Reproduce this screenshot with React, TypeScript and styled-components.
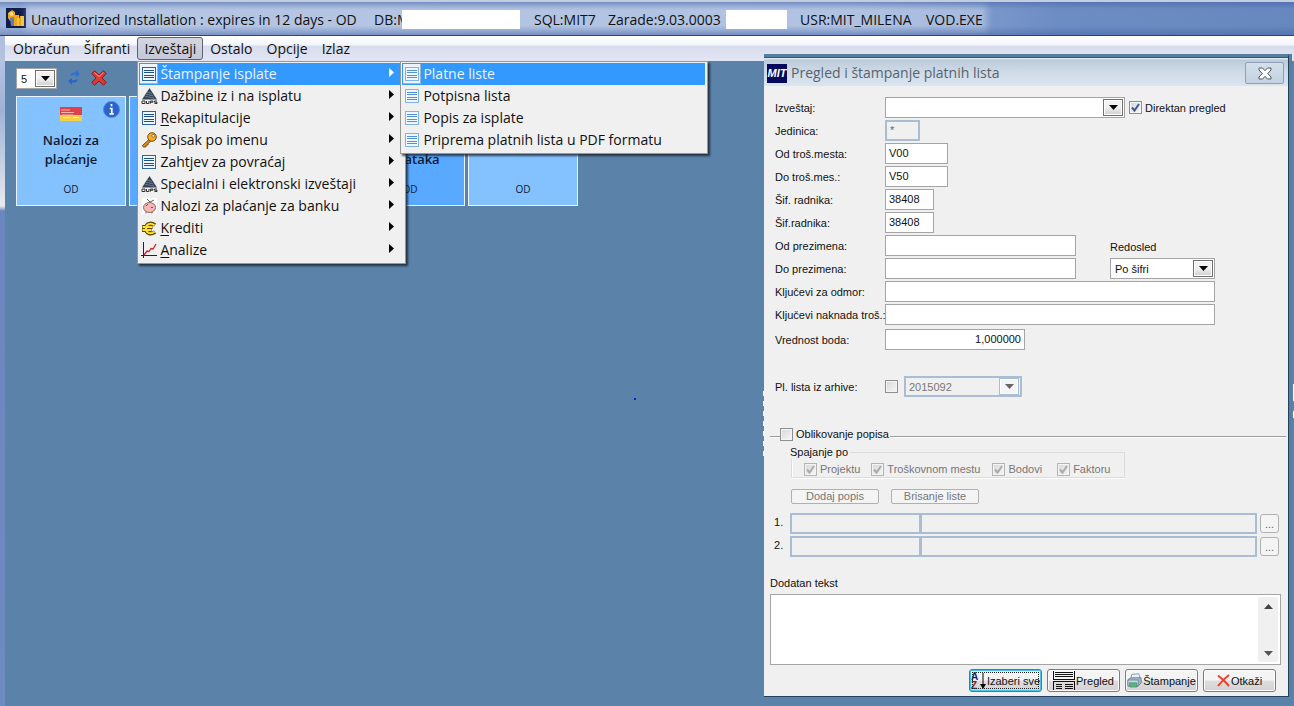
import React from "react";
import styled, { createGlobalStyle, css } from "styled-components";

const ui = `"Open Sans", "Noto Sans", sans-serif`;
const sans = `"Liberation Sans", Arial, sans-serif`;

const GlobalStyle = createGlobalStyle`
  *, *::before, *::after { box-sizing: border-box; }
  body { margin: 0; font-family: ${ui}; font-size: 14px; color: #111; }
  button, input, select, textarea { font: inherit; color: inherit; margin: 0; padding: 0; border-radius: 0; }
  fieldset { border: 0; margin: 0; padding: 0; min-width: 0; }
  ul { list-style: none; margin: 0; padding: 0; }
`;

/* ---------- main window ---------- */

const Window = styled.div`
  position: relative;
  display: flex;
  flex-direction: column;
  min-height: 100vh;
  overflow: hidden;
  padding-left: 5px;
  background: linear-gradient(#a3b7da 0, #b4c3e0 60px, #9fb2d6 110px, #e6e9f0 206px, #6b87bd 211px, #6d8cc0 100%);
`;

const TitleBar = styled.header`
  display: flex;
  align-items: center;
  height: 36px;
  margin-left: -5px;
  padding: 0 0 1px 6px;
  gap: 5px;
  border-top: 2px solid #c3cee0;
  border-bottom: 1px solid #2c4474;
  background: linear-gradient(rgba(60, 90, 160, 0.45), rgba(120, 150, 200, 0) 7px, rgba(120, 150, 200, 0) 24px, rgba(50, 80, 150, 0.35)),
    linear-gradient(90deg, #9fb4da, #93abd6 860px, #6c8cc4 1060px, #6787bf);
`;

const TitleText = styled.h1`
  display: grid;
  grid-template-columns: 343px 28px 132px 74px 118px 74px 126px auto;
  align-items: center;
  margin: 0;
  height: 16px;
  line-height: 16px;
  font-size: 14px;
  font-weight: 400;
  white-space: nowrap;
  background: rgba(205, 217, 238, 0.5);
  box-shadow: 0 0 7px 4px rgba(205, 217, 238, 0.5);
`;

const Redacted = styled.span<{ $width: number }>`
  position: relative;
  width: ${(p) => p.$width}px;
  height: 19px;
  background: #fff;
`;

const MenuBar = styled.nav`
  height: 25px;
  padding: 1px 1px;
  background: linear-gradient(#fff 0, #f3f5fb 9px, #d7dcec 10px, #e2e5f4 24px);
`;

const MenuBarList = styled.ul`
  display: flex;
`;

const MenuBarItem = styled.li`
  position: relative;
`;

const MenuBarButton = styled.button<{ $open?: boolean }>`
  height: 23px;
  padding: 0 6px;
  border: 1px solid ${(p) => (p.$open ? "#5d6272" : "transparent")};
  border-radius: 3px;
  background: ${(p) => (p.$open ? "linear-gradient(#d3d6e0, #c4c8d8)" : "none")};
  line-height: 20px;
`;

const Menu = styled.ul<{ $sub?: boolean }>`
  position: absolute;
  z-index: ${(p) => (p.$sub ? 6 : 5)};
  top: ${(p) => (p.$sub ? "-2px" : "24px")};
  left: ${(p) => (p.$sub ? "calc(100% - 3px)" : "0")};
  width: ${(p) => (p.$sub ? 308 : 269)}px;
  padding: 1px 2px 2px 1px;
  border: 1px solid #979797;
  background: #f0f0f0;
  box-shadow: 2px 2px 2px rgba(20, 25, 35, 0.75);
  color: #111;
`;

const MenuItem = styled.li`
  position: relative;
`;

const MenuButton = styled.button<{ $active?: boolean }>`
  display: flex;
  align-items: center;
  width: 100%;
  height: 22px;
  padding: 0 9px 0 1px;
  border: 0;
  background: ${(p) => (p.$active ? "#3399ff" : "none")};
  color: ${(p) => (p.$active ? "#e8f5ff" : "#111")};
  text-align: left;
  white-space: nowrap;
  line-height: 22px;
`;

const MenuIcon = styled.span<{ $raised?: boolean }>`
  display: grid;
  place-items: center;
  width: 18px;
  height: 20px;
  margin-right: 2px;
  ${(p) => p.$raised && css`
    background: #edf3f9;
    box-shadow: inset -1px -1px #9fb4c8;
  `}
`;

const MenuLabel = styled.span`
  flex: 1;
  u { text-underline-offset: 2px; }
`;

const Workspace = styled.main`
  flex: 1;
  padding: 8px 11px;
  background: #5b82a8;
`;

const Toolbar = styled.div`
  display: flex;
  align-items: center;
  gap: 9px;
  height: 19px;
  margin-bottom: 8px;
`;

const ToolButton = styled.button`
  display: grid;
  justify-items: center;
  align-items: start;
  width: 16px;
  height: 18px;
  border: 0;
  background: none;
`;

const Cards = styled.div`
  display: flex;
  gap: 3px;
`;

const Card = styled.button<{ $dark?: boolean }>`
  position: relative;
  display: grid;
  grid-template-rows: 34px 38px 1fr;
  justify-items: center;
  align-items: center;
  width: 110px;
  height: 110px;
  padding: 0;
  border: 1px solid #eaf4ff;
  background: ${(p) => (p.$dark ? "#58a9ff" : "#84c1ff")};
  color: #0d1c33;
`;

const CardTitle = styled.span`
  align-self: end;
  width: 80px;
  font-size: 13px;
  font-weight: 600;
  line-height: 19px;
`;

const CardCode = styled.span`
  font-size: 10px;
  padding-top: 4px;
`;

const CardInfo = styled.svg`
  position: absolute;
  top: 4px;
  right: 5px;
`;

const Spot = styled.i`
  position: absolute;
  left: 634px;
  top: 398px;
  width: 2px;
  height: 2px;
  background: #0a1bd0;
`;

/* ---------- dialog ---------- */

const Dialog = styled.section`
  position: absolute;
  z-index: 2;
  top: 54px;
  right: 5px;
  width: 525px;
  padding-bottom: 4px;
  border-top: 3px solid #587f9f;
  border-right: 1px solid #24405e;
  border-bottom: 1px solid #24405e;
  background: #f0f0f0;
  font-family: ${sans};
  font-size: 11px;
  line-height: 14px;
  box-shadow: 3px 0 #587f9f;
  &::before, &::after {
    content: "";
    position: absolute;
    background: repeating-linear-gradient(#fff 0 5px, transparent 5px 10px);
  }
  &::before {
    left: -1px;
    top: 334px;
    width: 1px;
    height: 70px;
  }
  &::after {
    right: -6px;
    top: 327px;
    width: 1px;
    height: 34px;
    background: linear-gradient(#fff 17px, transparent 17px 27px, #fff 27px);
  }
`;

const DialogTitle = styled.div`
  display: flex;
  align-items: center;
  height: 29px;
  padding: 2px 4px 0 3px;
  gap: 4px;
  border-top: 1px solid #34566f;
  background: linear-gradient(#eef3f8 0, #bccbdb 2px, #cfdae6 14px, #d9e5f1 100%);
`;

const MitLogo = styled.span`
  width: 20px;
  height: 19px;
  overflow: hidden;
  background: #05085c;
  color: #fff;
  font: italic 700 11px/19px ${sans};
  text-align: center;
`;

const DialogHeading = styled.h2`
  flex: 1;
  margin: 0;
  color: #56646f;
  font: 400 14px/22px ${ui};
`;

const CloseButton = styled.button`
  display: grid;
  place-items: center;
  width: 39px;
  height: 22px;
  border: 1px solid #8da0b8;
  border-radius: 2px;
  background: linear-gradient(#d3dfea, #c3d1e0);
`;

const Form = styled.form`
  padding: 11px 7px 0 6px;
`;

const Rows = styled.div`
  display: flex;
  flex-direction: column;
  gap: 2px;
  padding-left: 5px;
`;

const Row = styled.div<{ $before?: number }>`
  display: flex;
  align-items: center;
  height: 21px;
  margin-top: ${(p) => p.$before ?? 0}px;
`;

const Label = styled.label`
  flex: none;
  width: 110px;
  white-space: nowrap;
`;

const SideLabel = styled.label`
  margin-left: 34px;
  padding-top: 2px;
`;

const Side = styled.div<{ $gap: number }>`
  display: flex;
  margin-left: ${(p) => p.$gap}px;
`;

const TextBox = styled.input<{ $width: number }>`
  width: ${(p) => p.$width}px;
  height: 21px;
  padding: 0 3px 1px;
  border: 1px solid #a5a5a5;
  background: #fff;
  &:disabled {
    border: 2px solid #a9bdd3;
    background: #f0f0f0;
    color: #666;
  }
`;

const NumberBox = styled(TextBox)`
  text-align: right;
`;

const SelectFrame = styled.span<{ $width: number; $off?: boolean }>`
  display: grid;
  grid-template-columns: 1fr 21px;
  align-items: center;
  width: ${(p) => p.$width}px;
  height: 21px;
  border: ${(p) => (p.$off ? "2px solid #a9bdd3" : "1px solid #a5a5a5")};
  background: ${(p) => (p.$off ? "#f0f0f0" : "#fff")};
  color: ${(p) => (p.$off ? "#777" : "#111")};
  font: 11px/14px ${sans};
  select {
    grid-area: 1 / 1 / 2 / 3;
    width: 100%;
    height: 100%;
    padding-left: ${(p) => (p.$off ? 3 : 4)}px;
    border: 0;
    outline: 0;
    background: none;
    appearance: none;
    opacity: 1;
  }
`;

const Arrow = styled.span<{ $off?: boolean }>`
  grid-area: 1 / 2;
  display: grid;
  place-items: center;
  width: 20px;
  height: 17px;
  pointer-events: none;
  border: 1px solid ${(p) => (p.$off ? "#a9bdd3" : "#707070")};
  box-shadow: inset 0 0 0 1px #fff;
  background: ${(p) => (p.$off ? "#f2f4f6" : "linear-gradient(#f2f2f2 45%, #cfcfcf)")};
`;

const CheckLabel = styled.label<{ $off?: boolean; $after?: number }>`
  display: inline-flex;
  align-items: center;
  gap: 3px;
  margin-right: ${(p) => p.$after ?? 0}px;
  color: ${(p) => (p.$off ? "#777" : "#111")};
  white-space: nowrap;
`;

const CheckCell = styled.span<{ $off?: boolean }>`
  display: grid;
  width: 13px;
  height: 13px;
  input, svg { grid-area: 1 / 1; }
  svg { pointer-events: none; }
  input {
    width: 13px;
    height: 13px;
    appearance: none;
    border: 1px solid ${(p) => (p.$off ? "#b4b4b4" : "#8e8f8f")};
    box-shadow: inset 0 0 0 1px #f4f4f4;
    background: linear-gradient(135deg, #d5d9dd, #f6f6f6);
  }
`;

const Divider = styled.div`
  display: flex;
  align-items: center;
  height: 14px;
  margin: 30px -5px 0 0;
  &::before, &::after {
    content: "";
    height: 1px;
    margin-top: 4px;
    background: #9a9f9a;
    box-shadow: 0 1px #fff;
  }
  &::before { width: 10px; }
  &::after { flex: 1; margin-left: 1px; }
`;

const Merge = styled.fieldset`
  width: 334px;
  height: 33px;
  margin: 4px 0 0 21px;
  padding: 3px 0 0 12px;
  border: 1px solid #dcdcdc;
  box-shadow: inset 1px 0 #fff, 0 1px #fff;
  legend {
    margin-left: -16px;
    background: #f0f0f0;
  }
`;

const MergeChecks = styled.div`
  display: flex;
`;

const ListButtons = styled.div`
  display: flex;
  gap: 12px;
  margin: 11px 0 9px 21px;
`;

const SmallButton = styled.button`
  width: 88px;
  height: 15px;
  border: 1px solid #b0b0b0;
  border-radius: 2px;
  background: #f4f4f4;
  line-height: 13px;
  &:disabled { color: #777; }
`;

const ListRow = styled.div`
  display: flex;
  align-items: center;
  height: 21px;
  margin-bottom: 2px;
  > label { width: 20px; padding: 0 0 3px 4px; }
`;

const ListName = styled(TextBox)`
  flex: none;
`;

const ListText = styled(TextBox)`
  flex: 1;
  min-width: 0;
  margin-left: -1px;
`;

const MoreButton = styled.button`
  width: 19px;
  height: 19px;
  margin: 0 2px 0 3px;
  border: 1px solid #b0b0b0;
  border-radius: 3px;
  background: #f4f4f4;
  color: #666;
`;

const NoteLabel = styled.label`
  display: block;
  margin: 19px 0 4px;
`;

const NoteFrame = styled.div`
  display: flex;
  height: 71px;
  padding: 2px;
  border: 1px solid #a5a5a5;
  background: #fff;
  textarea {
    flex: 1;
    border: 0;
    outline: 0;
    resize: none;
    overflow: hidden;
    background: none;
  }
`;

const Scroll = styled.div`
  display: flex;
  flex-direction: column;
  justify-content: space-between;
  width: 20px;
  background: #f0f0f0;
  button {
    display: grid;
    place-items: center;
    height: 18px;
    border: 0;
    background: none;
  }
`;

const Actions = styled.div`
  display: flex;
  justify-content: flex-end;
  gap: 5px;
  margin: 4px 5px 0 0;
`;

const ActionButton = styled.button<{ $focus?: boolean }>`
  display: flex;
  align-items: center;
  justify-content: center;
  gap: 1px;
  width: 73px;
  height: 23px;
  border: 1px solid ${(p) => (p.$focus ? "#2a87a8" : "#7c7c7c")};
  border-radius: 3px;
  background: linear-gradient(#f4f4f4 48%, #dedede 52%, #d2d2d2);
  box-shadow: inset 0 0 0 1px ${(p) => (p.$focus ? "#4cc3ec" : "#fbfbfb")};
  outline: ${(p) => (p.$focus ? "1px dotted #222" : "none")};
  outline-offset: -4px;
  white-space: nowrap;
  svg { flex: none; }
`;

/* ---------- drawings ---------- */

const ListIcon = ({ pale }: { pale?: boolean }) => (
  <svg width="14" height="14" viewBox="0 0 14 14" shapeRendering="crispEdges">
    <rect x="0.5" y="0.5" width="13" height="13" fill="#eef6ff" stroke={pale ? "#7fb2e6" : "#2d64a3"} />
    <path d="M2 3.5h10M2 5.5h10M2 8.5h10M2 10.5h10" stroke={pale ? "#5590d0" : "#1f4d85"} />
  </svg>
);

const DursIcon = () => (
  <svg width="17" height="16" viewBox="0 0 17 16">
    <path d="M8.500 0 16 11.500H1z" fill="#33435a" />
    <path d="M6 4l5 1.500M4.500 6l8 2M3.500 8.200l10 2" stroke="#8f9bab" strokeWidth="0.600" />
    <path d="M1 13h3v2.500H1zM5.500 13v2.500h2.500V13M9.500 15.500V13H12v1.200H9.500M16 13h-2.500v1.200H16v1.300h-2.500" fill="none" stroke="#333" />
  </svg>
);

const KeyIcon = () => (
  <svg width="16" height="16" viewBox="0 0 16 16">
    <path d="M8.500 7 1.500 13.500l.8 1.500h2.500l.3-1.800 1.800-.2.400-1.800L10 9z" fill="#e0901a" stroke="#7c4a0a" />
    <circle cx="11" cy="5" r="4.300" fill="#f5ae2a" stroke="#7c4a0a" />
    <circle cx="12.200" cy="3.800" r="1.400" fill="#fff" stroke="#7c4a0a" strokeWidth="0.700" />
  </svg>
);

const PigIcon = () => (
  <svg width="15" height="16" viewBox="0 0 15 16">
    <rect width="15" height="16" fill="#fff" />
    <path d="M5 1l3 3 4-2M8 4v2" stroke="#60655a" fill="none" />
    <ellipse cx="7.500" cy="9.500" rx="6" ry="5" fill="#f3b7b4" stroke="#96605e" />
    <path d="M4 8l2-2M4 14v1.500M10 14v1.500M9 9.500h2" stroke="#7a4644" />
  </svg>
);

const EuroIcon = () => (
  <svg width="16" height="15" viewBox="0 0 16 15" fill="none">
    <path d="M14 4C9.500.8 5 2.800 5 7.500s4.500 6.700 9 3.500M1 6h10.500M1 9h9.500" stroke="#5f4a00" strokeWidth="3.800" />
    <path d="M13.500 4.300C9.500 1.500 5 3 5 7.500s4.500 6 8.500 3.200M1.500 6h9.500M1.500 9h8.500" stroke="#ffe030" strokeWidth="2" />
  </svg>
);

const ChartIcon = () => (
  <svg width="16" height="16" viewBox="0 0 16 16" fill="none">
    <path d="M2.500 0v16M0 13.500h16" stroke="#222" shapeRendering="crispEdges" />
    <path d="M3 13l3-4 2 .5 2-3 2 .5 3-5" stroke="#d3202c" strokeWidth="1.300" />
  </svg>
);

const AppIcon = () => (
  <svg width="20" height="20" viewBox="0 0 20 20">
    <rect width="20" height="20" fill="#0d1c4d" />
    <path d="M2 5l4-3 3 2v3h4v4l-2 1v6H6v-5H4l-2-3z" fill="#f0a51c" />
    <path d="M3 5l3-1 2 3-3 1z" fill="#ffe08a" />
    <path d="M4 10l4-1v9H5z" fill="#5e7fae" />
    <path d="M11 10h3V8h4v10h-7z" fill="#f8c53a" />
    <path d="M14 8v10" stroke="#c47c0b" strokeWidth="0.800" />
  </svg>
);

const RefreshIcon = () => (
  <svg width="14" height="15" viewBox="0 0 14 15">
    <path d="M3 6C4 3 6.500 2 9 2.500V0l4 4-4 3V5C7 4.500 5 5 3 6z" fill="#2f6fd4" />
    <path d="M11 9c-1 3-3.500 4-6 3.500V15l-4-4 4-3v2c2 .5 4 0 6-1z" fill="#2865c8" />
  </svg>
);

const DeleteIcon = () => (
  <svg width="16" height="16" viewBox="0 0 16 16">
    <path d="M3.500.8 8 5 12.500.8l2.700 2.700L11 8l4.200 4.500-2.700 2.700L8 11l-4.500 4.200L.8 12.500 5 8 .8 3.500z" fill="#dc3b34" stroke="#8e1713" />
    <path d="M3.500 2.500 8 6.500l4.500-4" stroke="#f59a8d" fill="none" />
  </svg>
);

const FlagIcon = () => (
  <svg width="22" height="14" viewBox="0 0 22 14">
    <rect width="22" height="8" fill="#e0404a" />
    <rect y="8" width="22" height="6" fill="#f5cf46" />
    <path d="M1 3h9M1 5.500h13M2 8h11" stroke="#f3b4b0" />
    <path d="M3 10.500h7M13 10.500h6" stroke="#fbe89a" />
  </svg>
);

const SortIcon = () => (
  <svg width="15" height="18" viewBox="0 0 15 18">
    <text x="0" y="8" fontFamily="Liberation Sans" fontWeight="700" fontSize="10" fill="#14148c">A</text>
    <text x="0" y="17" fontFamily="Liberation Sans" fontWeight="700" fontSize="10" fill="#a81414">Z</text>
    <path d="M12 1v12" stroke="#000" />
    <path d="M9 12h6l-3 5z" />
  </svg>
);

const PreviewIcon = () => (
  <svg width="22" height="19" viewBox="0 0 22 19" shapeRendering="crispEdges" stroke="#111" fill="none">
    <path d="M0.500 0v8M21.500 0v8M0.500 10v9M21.500 10v9" />
    <path d="M2 1.500h18M2 3.500h18M2 5.500h18M0 8.500h22M0 10.500h22M3 13.500h6M12 13.500h8M3 15.500h6M12 15.500h8M3 17.500h6M12 17.500h8" />
  </svg>
);

const PrinterIcon = () => (
  <svg width="15" height="15" viewBox="0 0 16 16" stroke="#5b7488" strokeWidth="0.700">
    <path d="M5 1.500 12.500.8 14 5 4 7z" fill="#e6f2fb" />
    <path d="M1 7l3-2 11 0 .5 5L12 14H1z" fill="#9db4c4" />
    <path d="M1 7.500h11v6H1z" fill="#c9d8e2" />
    <path d="M2.500 10.500h8V15h-7z" fill="#4bc06e" />
  </svg>
);

const CancelIcon = () => (
  <svg width="13" height="13" viewBox="0 0 13 13">
    <path d="M1 1.500c4 3 8 7 11 10.500M12 1C8 4 4 8 1 12" stroke="#ee3e2c" strokeWidth="2" fill="none" />
  </svg>
);

const CloseIcon = () => (
  <svg width="14" height="13" viewBox="0 0 14 13">
    <path d="M1 1h3.500L7 3.700 9.500 1H13v2L9.800 6.500 13 10v2H9.500L7 9.300 4.500 12H1v-2l3.200-3.500L1 3z" fill="#fff" stroke="#4f5a66" />
  </svg>
);

const Triangle = ({ color = "#000", up }: { color?: string; up?: boolean }) => (
  <svg width="9" height="5" viewBox="0 0 9 5">
    <path d={up ? "M0 5h9L4.500 0z" : "M0 0h9L4.500 5z"} fill={color} />
  </svg>
);

const SubArrow = ({ light }: { light?: boolean }) => (
  <svg width="5" height="13" viewBox="0 0 5 13">
    <path d="M0 0l5 4.500L0 9z" fill={light ? "#fff" : "#000"} />
  </svg>
);

/* ---------- composed controls ---------- */

function Check({ label, checked, off, after }: { label?: string; checked?: boolean; off?: boolean; after?: number }) {
  return (
    <CheckLabel $off={off} $after={after}>
      <CheckCell $off={off}>
        <input type="checkbox" defaultChecked={checked} disabled={off} aria-label={label ? undefined : "Arhiva"} />
        {checked && (
          <svg width="13" height="13" viewBox="0 0 13 13">
            <path d="M3 6.500 5.500 9.500 10 3" fill="none" stroke={off ? "#aaa" : "#3f5a94"} strokeWidth="2" />
          </svg>
        )}
      </CheckCell>
      {label}
    </CheckLabel>
  );
}

function Combo({ id, width, value, off, label }: { id?: string; width: number; value: string; off?: boolean; label?: string }) {
  return (
    <SelectFrame $width={width} $off={off}>
      <select id={id} disabled={off} defaultValue={value} aria-label={label}>
        <option>{value}</option>
      </select>
      <Arrow $off={off}>
        <Triangle color={off ? "#666" : "#000"} />
      </Arrow>
    </SelectFrame>
  );
}

const reports: { key?: string; text: string; icon: React.ReactNode }[] = [
  { text: "Štampanje isplate", icon: <ListIcon /> },
  { text: "Dažbine iz i na isplatu", icon: <DursIcon /> },
  { key: "R", text: "ekapitulacije", icon: <ListIcon /> },
  { text: "Spisak po imenu", icon: <KeyIcon /> },
  { text: "Zahtjev za povraćaj", icon: <ListIcon /> },
  { text: "Specialni i elektronski izveštaji", icon: <DursIcon /> },
  { text: "Nalozi za plaćanje za banku", icon: <PigIcon /> },
  { key: "K", text: "rediti", icon: <EuroIcon /> },
  { key: "A", text: "nalize", icon: <ChartIcon /> },
];

const payslips = ["Platne liste", "Potpisna lista", "Popis za isplate", "Priprema platnih lista u PDF formatu"];

function ReportsMenu() {
  return (
    <Menu>
      {reports.map((item, i) => (
        <MenuItem key={item.text}>
          <MenuButton $active={i === 0}>
            <MenuIcon $raised={i === 0}>{item.icon}</MenuIcon>
            <MenuLabel>
              {item.key && <u>{item.key}</u>}
              {item.text}
            </MenuLabel>
            <SubArrow light={i === 0} />
          </MenuButton>
          {i === 0 && (
            <Menu $sub>
              {payslips.map((text, j) => (
                <MenuItem key={text}>
                  <MenuButton $active={j === 0}>
                    <MenuIcon $raised={j === 0}><ListIcon pale /></MenuIcon>
                    <MenuLabel>{text}</MenuLabel>
                  </MenuButton>
                </MenuItem>
              ))}
            </Menu>
          )}
        </MenuItem>
      ))}
    </Menu>
  );
}

function PayslipDialog() {
  return (
    <Dialog role="dialog" aria-labelledby="dialog-title">
      <DialogTitle>
        <MitLogo>MIT</MitLogo>
        <DialogHeading id="dialog-title">Pregled i štampanje platnih lista</DialogHeading>
        <CloseButton aria-label="Zatvori"><CloseIcon /></CloseButton>
      </DialogTitle>
      <Form onSubmit={(e) => e.preventDefault()}>
        <Rows>
          <Row>
            <Label htmlFor="report">Izveštaj:</Label>
            <Combo id="report" width={240} value="" />
            <Side $gap={4}><Check label="Direktan pregled" checked /></Side>
          </Row>
          <Row>
            <Label htmlFor="unit">Jedinica:</Label>
            <TextBox id="unit" $width={35} defaultValue="*" disabled />
          </Row>
          <Row>
            <Label htmlFor="cost-from">Od troš.mesta:</Label>
            <TextBox id="cost-from" $width={63} defaultValue="V00" />
          </Row>
          <Row>
            <Label htmlFor="cost-to">Do troš.mes.:</Label>
            <TextBox id="cost-to" $width={63} defaultValue="V50" />
          </Row>
          <Row>
            <Label htmlFor="worker-from">Šif. radnika:</Label>
            <TextBox id="worker-from" $width={49} defaultValue="38408" />
          </Row>
          <Row>
            <Label htmlFor="worker-to">Šif.radnika:</Label>
            <TextBox id="worker-to" $width={49} defaultValue="38408" />
          </Row>
          <Row>
            <Label htmlFor="name-from">Od prezimena:</Label>
            <TextBox id="name-from" $width={191} />
            <SideLabel htmlFor="order">Redosled</SideLabel>
          </Row>
          <Row>
            <Label htmlFor="name-to">Do prezimena:</Label>
            <TextBox id="name-to" $width={191} />
            <Side $gap={34}><Combo id="order" width={105} value="Po šifri" /></Side>
          </Row>
          <Row>
            <Label htmlFor="leave">Ključevi za odmor:</Label>
            <TextBox id="leave" $width={330} />
          </Row>
          <Row>
            <Label htmlFor="costs">Ključevi naknada troš.:</Label>
            <TextBox id="costs" $width={330} />
          </Row>
          <Row $before={2}>
            <Label htmlFor="point">Vrednost boda:</Label>
            <NumberBox id="point" $width={140} defaultValue="1,000000" />
          </Row>
          <Row $before={24}>
            <Label htmlFor="archive">Pl. lista iz arhive:</Label>
            <Check after={6} />
            <Combo id="archive" width={118} value="2015092" off />
          </Row>
        </Rows>
        <Divider><Check label="Oblikovanje popisa" /></Divider>
        <Merge>
          <legend>Spajanje po</legend>
          <MergeChecks>
            <Check label="Projektu" checked off after={11} />
            <Check label="Troškovnom mestu" checked off after={12} />
            <Check label="Bodovi" checked off after={15} />
            <Check label="Faktoru" checked off />
          </MergeChecks>
        </Merge>
        <ListButtons>
          <SmallButton disabled>Dodaj popis</SmallButton>
          <SmallButton disabled>Brisanje liste</SmallButton>
        </ListButtons>
        {[1, 2].map((n) => (
          <ListRow key={n}>
            <label htmlFor={`list-${n}`}>{n}.</label>
            <ListName id={`list-${n}`} $width={131} disabled />
            <ListText aria-label={`Opis ${n}`} $width={100} disabled />
            <MoreButton disabled>...</MoreButton>
          </ListRow>
        ))}
        <NoteLabel htmlFor="note">Dodatan tekst</NoteLabel>
        <NoteFrame>
          <textarea id="note" />
          <Scroll>
            <button type="button" aria-label="Gore"><Triangle up color="#444" /></button>
            <button type="button" aria-label="Dole"><Triangle color="#555" /></button>
          </Scroll>
        </NoteFrame>
        <Actions>
          <ActionButton $focus><SortIcon />Izaberi sve</ActionButton>
          <ActionButton><PreviewIcon />Pregled</ActionButton>
          <ActionButton><PrinterIcon />Štampanje</ActionButton>
          <ActionButton><CancelIcon />Otkaži</ActionButton>
        </Actions>
      </Form>
    </Dialog>
  );
}

export default function App() {
  return (
    <Window>
      <GlobalStyle />
      <TitleBar>
        <AppIcon />
        <TitleText>
          <span>Unauthorized Installation : expires in 12 days - OD</span>
          <span>DB:M</span>
          <Redacted $width={118} />
          <span>SQL:MIT7</span>
          <span>Zarade:9.03.0003</span>
          <Redacted $width={61} />
          <span>USR:MIT_MILENA</span>
          <span>VOD.EXE</span>
        </TitleText>
      </TitleBar>
      <MenuBar>
        <MenuBarList>
          {["Obračun", "Šifranti", "Izveštaji", "Ostalo", "Opcije", "Izlaz"].map((name) => (
            <MenuBarItem key={name}>
              <MenuBarButton $open={name === "Izveštaji"}>{name}</MenuBarButton>
              {name === "Izveštaji" && <ReportsMenu />}
            </MenuBarItem>
          ))}
        </MenuBarList>
      </MenuBar>
      <Workspace>
        <Toolbar>
          <Combo width={41} value="5" label="Broj kolona" />
          <ToolButton aria-label="Osveži"><RefreshIcon /></ToolButton>
          <ToolButton aria-label="Obriši"><DeleteIcon /></ToolButton>
        </Toolbar>
        <Cards>
          <Card>
            <FlagIcon />
            <CardTitle>Nalozi za plaćanje</CardTitle>
            <CardCode>OD</CardCode>
            <CardInfo width="17" height="17" viewBox="0 0 17 17">
              <circle cx="8.500" cy="8.500" r="8" fill="#2b62cc" stroke="#5c86d8" />
              <path d="M8.500 3v2.300M6.800 7.500h2v5M6.500 12.800h4.300" stroke="#fff" strokeWidth="1.700" fill="none" />
            </CardInfo>
          </Card>
          <Card $dark aria-label="Kartica 2" />
          <Card aria-label="Kartica 3" />
          <Card $dark>
            <i />
            <CardTitle>podataka</CardTitle>
            <CardCode>OD</CardCode>
          </Card>
          <Card>
            <i />
            <i />
            <CardCode>OD</CardCode>
          </Card>
        </Cards>
      </Workspace>
      <Spot />
      <PayslipDialog />
    </Window>
  );
}
